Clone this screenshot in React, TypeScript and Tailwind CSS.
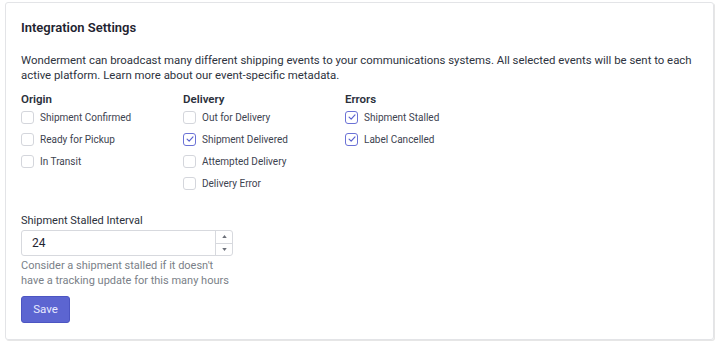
import React from 'react';

function Check({ label, checked }: { label: string; checked?: boolean }) {
  return (
    <label className="flex h-[22px] items-center">
      <span
        className={
          checked
            ? 'flex h-[13px] w-[13px] items-center justify-center rounded-[3px] border border-[#6b72d6] bg-white'
            : 'h-[13px] w-[13px] rounded-[3px] border border-[#d4d6dc] bg-white'
        }
      >
        {checked && (
          <svg viewBox="0 0 12 12" className="h-[10px] w-[10px]">
            <path d="M2.5 6.2 L5 8.6 L9.6 3.4" fill="none" stroke="#5a62cf" strokeWidth="1.4" strokeLinecap="round" strokeLinejoin="round" />
          </svg>
        )}
      </span>
      <span className="ml-[6px] text-[10px] text-[#3d4350]">{label}</span>
    </label>
  );
}

function Column({ title, items }: { title: string; items: [string, boolean][] }) {
  return (
    <div className="w-[162px]">
      <div className="text-[11.5px] leading-[14px] font-semibold text-[#2b303b]">{title}</div>
      {items.map(([l, c]) => (
        <Check key={l} label={l} checked={c} />
      ))}
    </div>
  );
}

export default function App() {
  return (
    <div className="h-[345px] w-[720px] bg-white pl-[5px] pr-[6px] pt-[2px] font-['Roboto',sans-serif]">
      <div className="h-[338px] rounded-[3px] border border-[#e3e4e7] pl-[15px] pr-[12px] pt-[17px] shadow-[1px_1px_0_0_#e6e6e6]">
        <h2 className="text-[13px] leading-[16px] font-semibold text-[#1f2430]">Integration Settings</h2>
        <p className="mt-[17px] text-[11.4px] leading-[15px] text-[#2e3340]">
          Wonderment can broadcast many different shipping events to your communications systems. All selected events will be sent to each active platform. Learn more about our event-specific metadata.
        </p>
        <div className="mt-[9px] flex">
          <Column
            title="Origin"
            items={[
              ['Shipment Confirmed', false],
              ['Ready for Pickup', false],
              ['In Transit', false],
            ]}
          />
          <Column
            title="Delivery"
            items={[
              ['Out for Delivery', false],
              ['Shipment Delivered', true],
              ['Attempted Delivery', false],
              ['Delivery Error', false],
            ]}
          />
          <Column
            title="Errors"
            items={[
              ['Shipment Stalled', true],
              ['Label Cancelled', true],
            ]}
          />
        </div>
        <div className="mt-[20px] text-[11px] leading-[14px] text-[#2b303b]">Shipment Stalled Interval</div>
        <div className="mt-[2px] flex h-[26px] w-[212px] rounded-[3px] border border-[#d7d9de]">
          <div className="flex flex-1 items-center pl-[10px] text-[12px] text-[#1f2430]">24</div>
          <div className="flex w-[17px] flex-col border-l border-[#d7d9de]">
            <div className="flex flex-1 items-center justify-center border-b border-[#d7d9de]">
              <svg viewBox="0 0 6 4" className="h-[3px] w-[5px]"><path d="M0 4 L3 0 L6 4 Z" fill="#6b6f78" /></svg>
            </div>
            <div className="flex flex-1 items-center justify-center">
              <svg viewBox="0 0 6 4" className="h-[3px] w-[5px]"><path d="M0 0 L3 4 L6 0 Z" fill="#6b6f78" /></svg>
            </div>
          </div>
        </div>
        <p className="mt-[2px] w-[216px] text-[11px] leading-[15px] text-[#7a7f88]">
          Consider a shipment stalled if it doesn't have a tracking update for this many hours
        </p>
        <button className="mt-[8px] block h-[27px] w-[49px] rounded-[3px] border border-[#4c55c2] bg-[#5c65d1] text-[11.5px] text-[#e8eaff]">
          Save
        </button>
      </div>
    </div>
  );
}
